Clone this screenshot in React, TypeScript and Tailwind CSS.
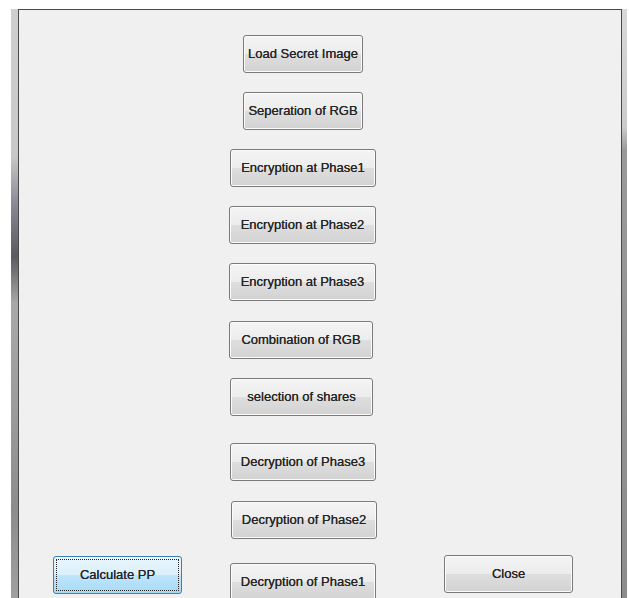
import React from "react";

type BtnProps = {
  label: string;
  className?: string;
  focused?: boolean;
};

function WinButton({ label, className = "", focused = false }: BtnProps) {
  if (focused) {
    return (
      <div
        className={`h-[38px] rounded-[3px] border border-[#3c7fb1] bg-[linear-gradient(to_bottom,#eaf6fd_0%,#d9f0fc_50%,#bee6fd_51%,#a7d9f5_100%)] p-[2px] ${className}`}
      >
        <div className="flex h-full w-full items-center justify-center border border-dotted border-[#222]">
          <span className="text-[13px] text-[#262626] [text-shadow:0_0_0.4px_#262626]">{label}</span>
        </div>
      </div>
    );
  }
  return (
    <div
      className={`flex h-[38px] items-center justify-center rounded-[3px] border border-[#7a7a7a] bg-[linear-gradient(to_bottom,#f4f4f4_0%,#ececec_50%,#dedede_51%,#d2d2d2_100%)] shadow-[inset_0_0_0_1px_#fbfbfb] ${className}`}
    >
      <span className="text-[13px] text-[#262626] [text-shadow:0_0_0.4px_#262626]">{label}</span>
    </div>
  );
}

export default function App() {
  return (
    <div
      className="h-[598px] w-[629px] overflow-hidden bg-white pt-[9px] pl-[11px]"
      style={{ fontFamily: '"Liberation Sans", Arial, sans-serif' }}
    >
      <div className="flex h-[589px] w-[616px]">
        {/* left window edge */}
        <div className="w-[7px] bg-[linear-gradient(to_bottom,#cfcfcf_0%,#c8c8c8_25%,#8a8a96_33%,#5a5a60_42%,#a8a8a8_50%,#9a9a9a_70%,#8c8c8c_85%,#a0a0a0_100%)]" />
        {/* client area */}
        <div className="flex h-full w-[604px] flex-col border-l border-t border-r border-[#4a4a4a] bg-[#f0f0f0]">
          <div className="flex flex-col items-start pt-[25px]">
            <WinButton label="Load Secret Image" className="ml-[224px] w-[120px]" />
            <WinButton label="Seperation of RGB" className="ml-[224px] mt-[19px] w-[120px]" />
            <WinButton label="Encryption at Phase1" className="ml-[211px] mt-[19px] w-[146px]" />
            <WinButton label="Encryption at Phase2" className="ml-[210px] mt-[19px] w-[147px]" />
            <WinButton label="Encryption at Phase3" className="ml-[210px] mt-[19px] w-[147px]" />
            <WinButton label="Combination of RGB" className="ml-[210px] mt-[20px] w-[144px]" />
            <WinButton label="selection of shares" className="ml-[211px] mt-[19px] w-[143px]" />
            <WinButton label="Decryption of Phase3" className="ml-[211px] mt-[27px] w-[146px]" />
            <WinButton label="Decryption of Phase2" className="ml-[212px] mt-[20px] w-[146px]" />
          </div>
          <div className="mt-[16px] flex items-start">
            <WinButton label="Calculate PP" focused className="ml-[34px] mt-[1px] w-[129px]" />
            <WinButton label="Decryption of Phase1" className="ml-[48px] mt-[8px] w-[146px]" />
            <WinButton label="Close" className="ml-[68px] w-[129px]" />
          </div>
        </div>
        {/* right window edge */}
        <div className="w-[5px] bg-[linear-gradient(to_bottom,#d8d8d8_0%,#cccccc_20%,#9a9a9a_24%,#8c8c8c_100%)]" />
      </div>
    </div>
  );
}
